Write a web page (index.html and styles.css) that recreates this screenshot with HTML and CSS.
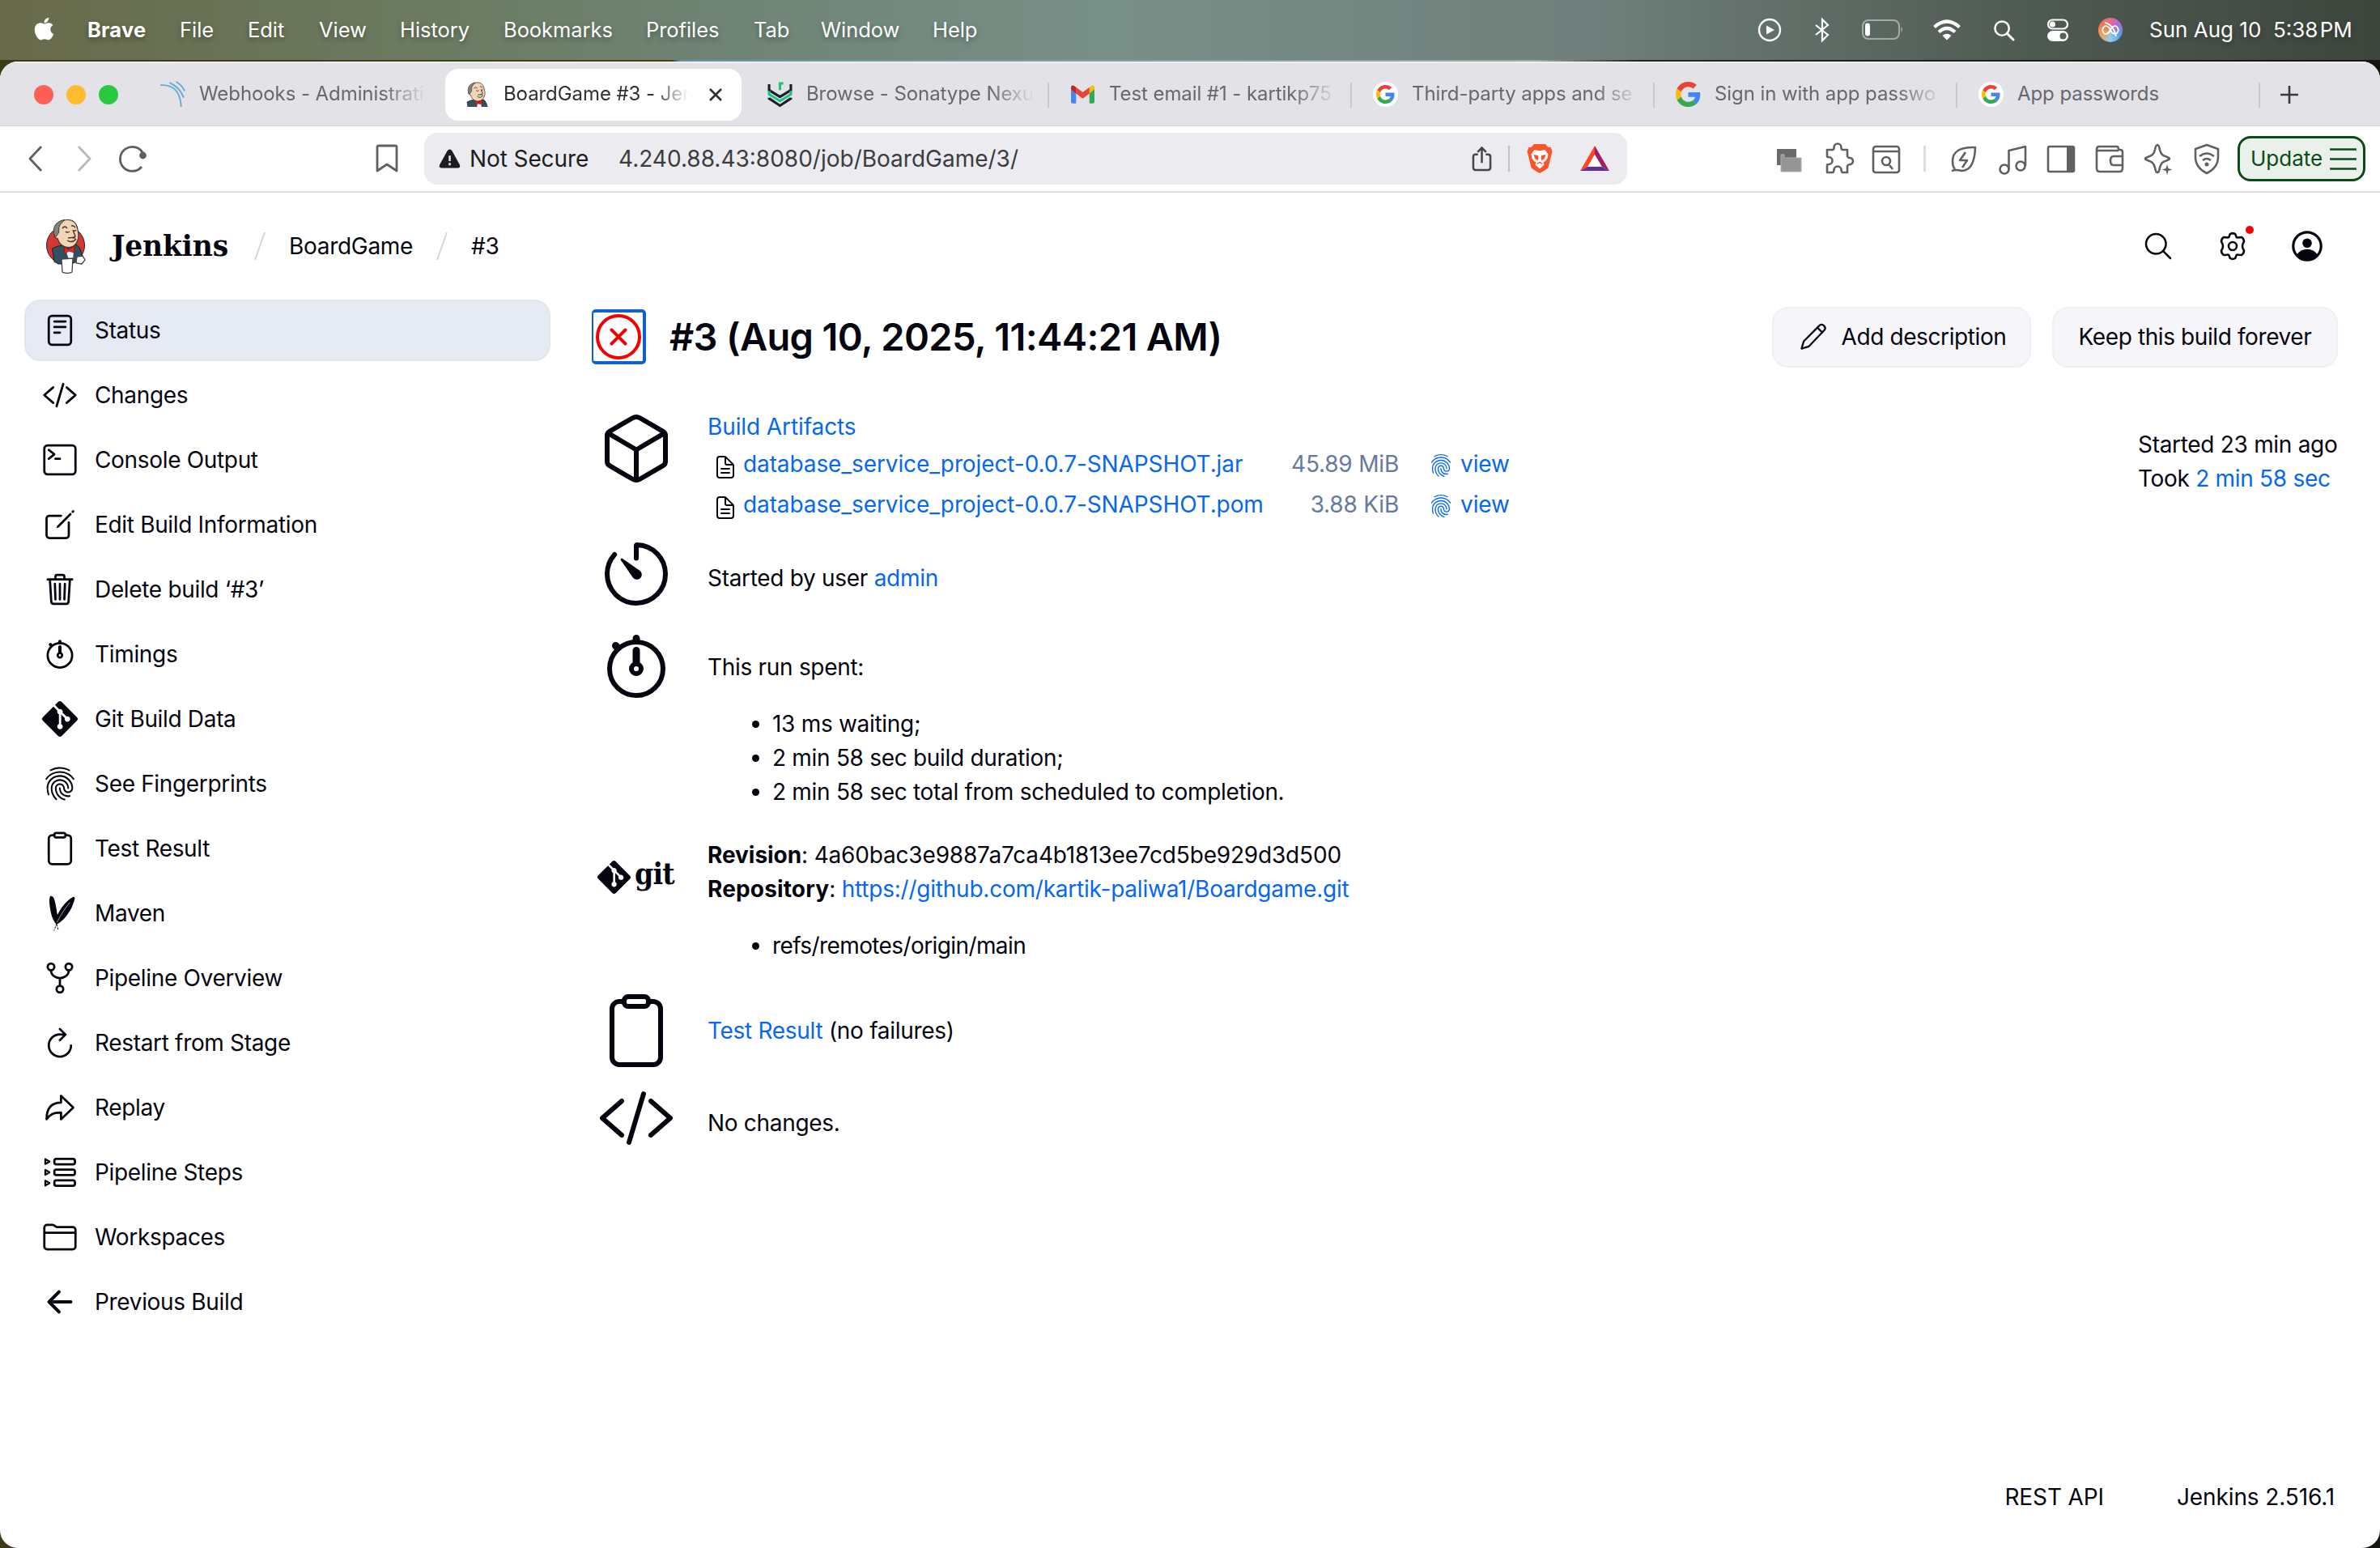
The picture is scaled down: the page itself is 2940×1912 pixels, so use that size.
FILE: index.html
```html
<!DOCTYPE html>
<html lang="en">
<head>
<meta charset="utf-8">
<title>BoardGame #3 - Jenkins</title>
<link rel="stylesheet" href="styles.css">
</head>
<body>
<svg class="defs" aria-hidden="true">
  <symbol id="reader" viewBox="0 0 512 512"><rect x="96" y="48" width="320" height="416" rx="48"/><path d="M176 128h160M176 208h160M176 288h80"/></symbol>
  <symbol id="code" viewBox="0 0 512 512"><path d="M160 368L32 256l128-112M352 368l128-112-128-112M304 96l-96 320"/></symbol>
  <symbol id="terminal" viewBox="0 0 512 512"><rect x="32" y="48" width="448" height="416" rx="48"/><path d="M96 112l80 64-80 64M192 240h64"/></symbol>
  <symbol id="edit" viewBox="0 0 512 512"><path d="M384 224v184a40 40 0 01-40 40H104a40 40 0 01-40-40V168a40 40 0 0140-40h167.48"/><path class="solid" d="M459.94 53.25a16.06 16.06 0 00-23.22-.56L424.35 65a8 8 0 000 11.31l11.34 11.32a8 8 0 0011.34 0l12.06-12c6.1-6.09 6.67-16.01.85-22.38zM399.34 90L218.82 270.2a9 9 0 00-2.31 3.93L208.16 299a3.91 3.91 0 004.86 4.86l24.85-8.35a9 9 0 003.93-2.31L422 112.66a9 9 0 000-12.66l-9.95-10a9 9 0 00-12.71 0z"/></symbol>
  <symbol id="trash" viewBox="0 0 512 512"><path d="M112 112l20 320c.95 18.49 14.4 32 32 32h184c17.67 0 30.87-13.51 32-32l20-320M80 112h352M192 112V72a24 24 0 0124-24h80a24 24 0 0124 24v40M256 176v224M184 176l8 224M328 176l-8 224"/></symbol>
  <symbol id="stopwatch" viewBox="0 0 512 512"><path stroke-width="48" d="M256 232v-80M256 88V72M132 132l-12-12"/><circle cx="256" cy="272" r="32"/><circle cx="256" cy="272" r="176"/></symbol>
  <symbol id="git" viewBox="0 0 24 24"><path class="solid" d="M23.546 10.93L13.067.452c-.604-.603-1.582-.603-2.188 0L8.708 2.627l2.76 2.76c.645-.215 1.379-.07 1.889.441.516.515.658 1.258.438 1.9l2.658 2.66c.645-.223 1.387-.078 1.9.435.721.72.721 1.884 0 2.604-.719.719-1.881.719-2.6 0-.539-.541-.674-1.337-.404-1.996L12.86 8.955v6.525c.176.086.342.203.488.348.713.721.713 1.883 0 2.6-.719.721-1.889.721-2.609 0-.719-.719-.719-1.879 0-2.598.182-.18.387-.316.605-.406V8.835c-.217-.091-.424-.222-.6-.401-.545-.545-.676-1.342-.396-2.009L7.636 3.7.45 10.881c-.6.605-.6 1.584 0 2.189l10.48 10.477c.604.604 1.582.604 2.186 0l10.43-10.43c.605-.603.605-1.582 0-2.187"/></symbol>
  <symbol id="finger" viewBox="0 0 512 512"><path class="solid" d="M390.42 75.28a10.45 10.45 0 01-5.32-1.44C340.72 50.08 302.35 40 256.35 40c-45.77 0-89.23 11.28-128.76 33.84C122 77 115.11 74.8 111.87 69a12.4 12.4 0 014.63-16.32A281.81 281.81 0 01256.35 16c49.23 0 92.23 11.28 139.39 36.48a12 12 0 014.85 16.08 11.3 11.3 0 01-10.17 6.72zm-330.79 126a11.73 11.73 0 01-6.7-2.16 12.26 12.26 0 01-2.78-16.8c22.89-33.6 52-60 86.69-78.48C209.42 65 302.35 64.72 375.16 103.6c34.68 18.48 63.8 44.64 86.69 78a12.29 12.29 0 01-2.78 16.8 11.26 11.26 0 01-16.18-2.88c-20.8-30.24-47.15-54-78.36-70.56-66.34-35.28-151.18-35.28-217.29.24-31.44 16.8-57.79 40.8-78.59 71a10 10 0 01-9.02 5.08zM204.1 491a10.66 10.66 0 01-8.09-3.6C175.9 466.48 165 453 149.55 424c-16-29.52-24.27-65.52-24.27-104.16 0-71.28 58.71-129.36 130.84-129.36S387 248.56 387 319.84a11.56 11.56 0 11-23.11 0c0-58.08-48.32-105.36-107.72-105.36S148.4 261.76 148.4 319.84c0 34.56 7.39 66.48 21.49 92.4 14.8 27.6 25 39.36 42.77 58.08a12.67 12.67 0 010 17 12.44 12.44 0 01-8.56 3.68zm165.75-44.4c-27.51 0-51.78-7.2-71.66-21.36a129.1 129.1 0 01-55-105.36 11.57 11.57 0 1123.12 0 104.28 104.28 0 0044.84 85.44c16.41 11.52 35.6 17 58.72 17a147.41 147.41 0 0024-2.4c6.24-1.2 12.25 3.12 13.4 9.84a11.92 11.92 0 01-9.47 13.92 152.28 152.28 0 01-27.95 2.88zM323.38 496a13 13 0 01-3-.48c-36.76-10.56-60.8-24.72-86-50.4-32.37-33.36-50.16-77.76-50.16-125.28 0-38.88 31.9-70.56 71.19-70.56s71.2 31.68 71.2 70.56c0 25.68 21.5 46.56 48.08 46.56s48.08-20.88 48.08-46.56c0-90.48-75.13-163.92-167.59-163.92-65.65 0-125.75 37.92-152.79 96.72-9 19.44-13.64 42.24-13.64 67.2 0 18.72 1.61 48.24 15.48 86.64 2.32 6.24-.69 13.2-6.7 15.36a11.34 11.34 0 01-14.79-7 276.39 276.39 0 01-16.88-95c0-28.8 5.32-55 15.72-77.76 30.75-67 98.94-110.4 173.6-110.4 105.18 0 190.71 84.24 190.71 187.92 0 38.88-31.9 70.56-71.2 70.56s-71.2-31.68-71.2-70.56C303.5 293.92 282 273 255.42 273s-48.08 20.88-48.08 46.56c0 41 15.26 79.44 43.23 108.24 22 22.56 43 35 75.59 44.16 6.24 1.68 9.94 8.4 8.32 14.64a11.3 11.3 0 01-11.1 9.4z"/></symbol>
  <symbol id="clipboard" viewBox="0 0 512 512"><path d="M336 64h32a48 48 0 0148 48v320a48 48 0 01-48 48H144a48 48 0 01-48-48V112a48 48 0 0148-48h32"/><rect x="176" y="32" width="160" height="64" rx="26"/></symbol>
  <symbol id="maven" viewBox="0 0 44 44"><path class="solid" d="M10 1c3-1 5 2 6 7 1.500 6 2 12 3 16C23 16 29 7 38 2c2-.8 3 1 2 3.500-2 6-4 12-8 17-3 5-7 9-12.500 12.500l-2 .5C13 30 11 24 10 16 9 11 8.500 4 10 1z"/><path d="M18 35l-3 8M18 36l2 7" stroke-width="1" stroke-dasharray="2 2"/><path d="M34 9C28 16 22 26 18.500 33" stroke="#fff" stroke-width=".6"/></symbol>
  <symbol id="network" viewBox="0 0 512 512"><circle cx="128" cy="96" r="48"/><circle cx="256" cy="416" r="48"/><circle cx="384" cy="96" r="48"/><path d="M256 256v112M128 144c0 74.67 68.92 112 128 112M384 144c0 74.67-68.920 112-128 112"/></symbol>
  <symbol id="refresh" viewBox="0 0 512 512"><path d="M320 146s24.360-12-64-12a160 160 0 10160 160M256 58l80 80-80 80"/></symbol>
  <symbol id="redo" viewBox="0 0 512 512"><path d="M448 256L272 88v96C103.570 184 64 304.770 64 424c48.610-62.240 91.600-96 208-96v96z"/></symbol>
  <symbol id="steps" viewBox="0 0 512 512"><rect x="176" y="62" width="296" height="78" rx="28"/><rect x="176" y="217" width="296" height="78" rx="28"/><rect x="176" y="372" width="296" height="78" rx="28"/><path stroke-width="26" d="M46 66l62 35-62 35zM46 221l62 35-62 35zM46 376l62 35-62 35z"/></symbol>
  <symbol id="folder" viewBox="0 0 512 512"><path d="M440 432H72a40 40 0 01-40-40V120a40 40 0 0140-40h75.890a40 40 0 0122.190 6.720l27.840 18.560a40 40 0 0022.190 6.720H440a40 40 0 0140 40v240a40 40 0 01-40 40zM32 192h448"/></symbol>
  <symbol id="back" viewBox="0 0 512 512"><path stroke-width="48" d="M244 400L100 256l144-144M120 256h292"/></symbol>
  <symbol id="cube" viewBox="0 0 512 512"><path d="M448 341.370V170.610A32 32 0 00432.110 143l-152-88.460a47.940 47.940 0 00-48.240 0L79.890 143A32 32 0 0064 170.610v170.760A32 32 0 0079.890 369l152 88.460a48 48 0 0048.240 0l152-88.460A32 32 0 00448 341.370zM69 154l187 110 187-110M256 464V264"/></symbol>
  <symbol id="timer" viewBox="0 0 512 512"><path d="M112.910 128A191.850 191.850 0 0064 254c-1.180 106.350 85.650 193.800 192 194 106.200.2 192-85.830 192-192 0-104.540-83.550-189.610-187.500-192a4.360 4.360 0 00-4.500 4.370V152"/><path class="solid" d="M233.380 278.630l-79-113a8.130 8.130 0 0111.320-11.320l113 79a32.500 32.500 0 01-37.250 53.260 33.210 33.210 0 01-8.070-7.940z"/></symbol>
  <symbol id="doc" viewBox="0 0 512 512"><path d="M416 221.250V416a48 48 0 01-48 48H144a48 48 0 01-48-48V96a48 48 0 0148-48h98.750a32 32 0 0122.620 9.370l141.260 141.260a32 32 0 019.370 22.620zM256 56v120a32 32 0 0032 32h120M176 288h160M176 368h160"/></symbol>
  <symbol id="search" viewBox="0 0 512 512"><circle cx="221" cy="221" r="157"/><path d="M338 338l110 110"/></symbol>
  <symbol id="gear" viewBox="0 0 44 44"><circle cx="22" cy="22" r="5.500"/><path d="M18.500 5.500Q22 3.500 25.500 5.500L27 9.500Q28 10.800 30 10.200L34 9.800Q37 11.500 37.500 15.500L35.800 19Q34.600 22 35.800 25L37.500 28.500Q37 32.500 34 34.200L30 33.800Q28 33.200 27 34.500L25.500 38.500Q22 40.500 18.500 38.500L17 34.500Q16 33.200 14 33.800L10 34.200Q7 32.500 6.500 28.500L8.200 25Q9.400 22 8.200 19L6.500 15.500Q7 11.500 10 9.800L14 10.200Q16 10.800 17 9.500Z"/></symbol>
  <symbol id="pencil" viewBox="0 0 44 44"><path stroke-width="2.500" d="M6 38l3-10L30.500 6.500q3-2.500 6 .5t.5 6L16 35zM27.500 9.500l6.500 6.500"/></symbol>
  <symbol id="google" viewBox="0 0 48 48"><path fill="#ea4335" d="M24 9.500c3.540 0 6.710 1.220 9.210 3.600l6.850-6.850C35.900 2.380 30.470 0 24 0 14.620 0 6.510 5.380 2.560 13.220l7.980 6.190C12.430 13.720 17.740 9.500 24 9.500z"/><path fill="#4285f4" d="M46.980 24.550c0-1.570-.15-3.090-.38-4.550H24v9.020h12.940c-.58 2.960-2.260 5.480-4.780 7.180l7.730 6c4.510-4.180 7.090-10.360 7.090-17.650z"/><path fill="#fbbc05" d="M10.530 28.590c-.48-1.450-.76-2.990-.76-4.590s.27-3.140.76-4.590l-7.980-6.190C.92 16.460 0 20.120 0 24c0 3.880.92 7.540 2.560 10.780l7.970-6.190z"/><path fill="#34a853" d="M24 48c6.480 0 11.930-2.130 15.890-5.810l-7.730-6c-2.150 1.450-4.920 2.300-8.160 2.300-6.260 0-11.570-4.220-13.470-9.910l-7.980 6.190C6.510 42.620 14.620 48 24 48z"/></symbol>
  <g id="bust">
    <path fill="#335061" stroke="#1c2b36" stroke-width="1.200" d="M8.500 37q5-3 12-4l6 4 9-5q6 1 8 7l3 9-6 4-8 4H16l-5-3z"/>
    <path fill="#f0d6b7" stroke="#49352a" stroke-width="1.200" d="M12 16C12 6 19 1.500 28 1.500c8 0 11 6 12 12 1 5 2 9 0 13-2 6-6 9-11 9-7 0-12-4-14-11-4 0-5-4-3-8.500z"/>
    <path fill="#7d8287" stroke="#49352a" stroke-width="1" d="M10.500 18C9 9 15 2.500 24 1.500c-3 3-6 5-7 9l-.5 7-3.500 5q-2-1-2.500-4.500z"/>
    <path fill="none" stroke="#49352a" stroke-width="1.400" d="M21 12q3-4 6 0M32 9q3-1 5 2M25 16q2 2 5 0M34 15q2 1 4-1M34 14l3 8-3 1.500M27 27q6 4 11-2M28 24q4-1 9 0"/>
    <path fill="#fff" d="M25 39h10l-1 12-5-1z"/>
    <path fill="#e0252a" stroke="#7a1111" stroke-width=".8" d="M23 35l6 3 7-4v8l-7-2-5 4z"/>
  </g>
  <symbol id="butler" viewBox="0 0 50 68">
    <circle cx="25" cy="33" r="23.500" fill="#d33833" stroke="#3a2020" stroke-width="1"/>
    <use href="#bust"/>
    <path fill="#fff" stroke="#444" stroke-width="1.300" d="M20 50l14-1-1 17q-6 3-12 0zM39 47l7-1 3 5-4 5-7-1z"/>
  </symbol>
</svg>

<header class="menubar">
  <svg class="apple" viewBox="0 0 24 24"><path d="M17.050 20.280c-.98.950-2.050.800-3.080.350-1.090-.460-2.090-.480-3.240 0-1.440.620-2.200.440-3.060-.350C2.790 15.250 3.510 7.590 9.050 7.310c1.350.070 2.290.740 3.080.800 1.180-.240 2.310-.930 3.570-.840 1.510.120 2.650.720 3.400 1.800-3.120 1.870-2.380 5.980.480 7.130-.570 1.500-1.310 2.990-2.540 4.090zM12.030 7.250c-.150-2.230 1.660-4.070 3.740-4.250.290 2.580-2.340 4.500-3.740 4.250z"/></svg>
  <nav class="menus"><b>Brave</b><span>File</span><span>Edit</span><span>View</span><span>History</span><span>Bookmarks</span><span>Profiles</span><span>Tab</span><span>Window</span><span>Help</span></nav>
  <div class="tray">
    <svg class="t-play" viewBox="0 0 30 30"><circle cx="15" cy="15" r="13" fill="none" stroke="#fff" stroke-width="2.400"/><path fill="#fff" d="M11 9.500v11l10-5.500z"/></svg>
    <svg class="t-bt" viewBox="0 0 20 30"><path fill="none" stroke="#fff" stroke-width="2.200" d="M2 9l15 12-7 7V2l7 7L2 21"/></svg>
    <svg class="t-bat" viewBox="0 0 52 26"><rect x="1" y="1" width="45" height="23" rx="7" fill="none" stroke="#fff" stroke-opacity=".45" stroke-width="2"/><rect x="4" y="4.500" width="6" height="16" rx="3" fill="#fff"/><path fill="#fff" fill-opacity=".5" d="M48.500 9q3 3.500 0 7z"/></svg>
    <svg class="t-wifi" viewBox="0 0 34 26"><path fill="none" stroke="#fff" stroke-width="4.200" d="M1.500 9.500q15.500-14 31 0M7 15.500q10-9 20 0"/><path fill="#fff" d="M11.500 20q5.500-4.500 11 0L17 25.500z"/></svg>
    <svg class="t-search" viewBox="0 0 28 28"><circle cx="11.500" cy="11.500" r="9" fill="none" stroke="#fff" stroke-width="2.600"/><path d="M18 18l8 8" stroke="#fff" stroke-width="3" stroke-linecap="round"/></svg>
    <svg class="t-cc" viewBox="0 0 28 28"><rect x="2" y="1.500" width="24" height="11" rx="5.500" fill="none" stroke="#fff" stroke-width="2.200"/><circle cx="7.500" cy="7" r="3.500" fill="#fff"/><rect x="1" y="15" width="26" height="13" rx="6.500" fill="#fff"/><circle cx="20.500" cy="21.500" r="4" fill="#58625a"/></svg>
    <span class="siri"><svg viewBox="0 0 30 30"><path fill="none" stroke="#fff" stroke-width="1.800" d="M5 15c2-7 7-6 10 0s8 7 10 0c-2-7-7-6-10 0s-8 7-10 0M8 6c6 1 12 7 14 17"/></svg></span>
    <span class="clock">Sun Aug 10&nbsp; 5:38&#8202;PM</span>
  </div>
</header>

<div class="window">
  <div class="tabstrip">
    <div class="lights"><i class="red"></i><i class="yellow"></i><i class="green"></i></div>
    <div class="tab first"><svg class="fav" viewBox="0 0 30 30" fill="none" stroke="#67a9d6" stroke-width="1.800"><path d="M0 4c16-1 24 8 25 26M11 1c9 4 14 9 17 18M19 0c5 3 8 6 10 11"/></svg><span class="tt fade">Webhooks - Administrati</span></div>
    <div class="tab active"><svg class="fav head" viewBox="7 0 40 46"><use href="#bust"/></svg><span class="tt fade">BoardGame #3 - Jen</span><svg class="close" viewBox="0 0 18 18"><path d="M2 2l14 14M16 2L2 16" stroke="#303033" stroke-width="2.600"/></svg></div>
    <div class="tab sep"><svg class="fav" viewBox="0 0 30 30" fill="none" stroke-width="3"><path stroke="#1b1c30" d="M2 3v7l13 8 13-8V3"/><path stroke="#1bc47d" d="M2 11v4l13 8 13-8v-4M15 10V2l4 0"/><path stroke="#1b1c30" d="M2 19v1l13 8.500 13-8.500v-1"/></svg><span class="tt fade">Browse - Sonatype Nexu</span></div>
    <div class="tab sep"><svg class="fav" viewBox="0 0 30 30"><path fill="#4285f4" d="M1 8l6 4.500V26H3q-2 0-2-2z"/><path fill="#34a853" d="M23 12.500L29 8v16q0 2-2 2h-4z"/><path fill="#fbbc04" d="M23 6.500q6-4.500 6 .5v2l-6 5z"/><path fill="#ea4335" d="M7 6.500l8 6 8-6V14l-8 6-8-6z"/><path fill="#c5221f" d="M7 6.500Q1 2 1 7v2l6 5z"/></svg><span class="tt fade">Test email #1 - kartikp75</span></div>
    <div class="tab sep"><span class="fav disc"><svg viewBox="0 0 48 48"><use href="#google"/></svg></span><span class="tt fade">Third-party apps and se</span></div>
    <div class="tab sep"><svg class="fav" viewBox="0 0 48 48"><use href="#google"/></svg><span class="tt fade">Sign in with app passwo</span></div>
    <div class="tab sep"><span class="fav disc"><svg viewBox="0 0 48 48"><use href="#google"/></svg></span><span class="tt">App passwords</span></div>
    <svg class="plus" viewBox="0 0 22 22"><path d="M11 0v22M0 11h22" stroke="#3a3a3d" stroke-width="2.600"/></svg>
  </div>

  <div class="toolbar">
    <svg class="nav-i" viewBox="0 0 60 60"><path d="M37 15L23 30l14 15"/></svg>
    <svg class="nav-i dim" viewBox="0 0 60 60"><path d="M23 15l14 15-14 15"/></svg>
    <svg class="nav-i" viewBox="0 0 60 60"><path d="M41 40A15 15 0 1 1 43 24"/><circle cx="42.500" cy="26" r="3" fill="#5f6064"/></svg>
    <svg class="nav-i mark" viewBox="0 0 60 60"><path d="M18 15.500q0-1.500 2-1.500h20q2 0 2 1.500V45l-12-8-12 8z"/></svg>
    <div class="urlbar">
      <svg class="warn" viewBox="0 0 28 26"><path fill="#1d1d20" d="M14 1q2 0 3 2l10 18q1 4-3 4H4q-4 0-3-4L11 3q1-2 3-2z"/><path d="M14 9v7M14 18.500v3" stroke="#ecebf0" stroke-width="2.600"/></svg>
      <span class="ns">Not Secure</span>
      <span class="url">4.240.88.43:8080/job/BoardGame/3/</span>
      <svg class="share" viewBox="0 0 26 34"><path fill="none" stroke="#454548" stroke-width="2.600" d="M8 11H5q-3 0-3 3v14q0 3 3 3h16q3 0 3-3V14q0-3-3-3h-3M13 22V3M7.500 8L13 2.500 18.500 8"/></svg>
      <i class="usep"></i>
      <svg class="lion" viewBox="0 0 32 36"><path fill="#fb542b" d="M9 0h14l3.500 4 3-.3 2 5.300-1 4-4 16Q25 31 16 36 7 31 5.500 29l-4-16-1-4 2-5.300 3 .3z"/><path fill="#fff" d="M9.500 7l6.500 1.300L22.500 7l4 5.500-1 5-2.500 3.500-2.500 1.500 1 3-5.500 5-5.500-5 1-3L9 21l-2.500-3.500-1-5z"/><path fill="#fb542b" d="M8.500 13l5.500 1 .5 3-1 3.500-3.500-3zM23.500 13l-5.500 1-.5 3 1 3.500 3.500-3zM12 24l4-2.500 4 2.500-1 .8-3-1.500-3 1.500z"/></svg>
      <svg class="bat" viewBox="0 0 36 32"><path fill="#ff4724" d="M18 0v11L9 26 0 31z"/><path fill="#9e1f63" d="M18 0l18 31-9-5-9-15z"/><path fill="#662d91" d="M0 31l9-5h18l9 5z"/><path fill="#fff" d="M18 11l8 14H10z"/></svg>
    </div>
    <div class="ext">
      <svg viewBox="0 0 60 60"><path stroke="none" fill="#6a6a6c" d="M15 18h24v20H15z"/><path fill="#959595" stroke="#b0b0b0" stroke-width="1" d="M20 25h4v4h21v17H20z"/></svg>
      <svg viewBox="0 0 60 60"><path d="M17 19h7q2-1 1.500-3a4.500 4.500 0 019 0q-.5 2 1.500 3h6v8q1 2 3 2a4 4 0 010 8q-2 0-3 2v8h-6q-1 0-1.500-3a4.500 4.500 0 00-9 0q-.5 3-1.500 3h-7v-9q0-1 2-1a4.500 4.500 0 000-9q-2 0-2-1z"/></svg>
      <svg viewBox="0 0 60 60"><rect x="14" y="15" width="32" height="32" rx="3"/><path d="M14 21h32M34 38l4 5"/><circle cx="30" cy="33" r="5"/></svg>
      <i class="esep"></i>
      <svg viewBox="0 0 60 60"><path d="M15 45q6-2 12 0 16 0 17-29-28-1-28 17 0 7 3 10M32 22l-7 10h9l-6 9"/></svg>
      <svg viewBox="0 0 60 60"><circle cx="20" cy="43" r="5.500"/><circle cx="40" cy="39" r="5.500"/><path d="M25.500 43V20L46 15v24"/></svg>
      <svg viewBox="0 0 60 60"><rect x="14" y="15" width="32" height="31" rx="2"/><path stroke="none" fill="#5f6064" d="M37 15h9v31h-9z"/></svg>
      <svg viewBox="0 0 60 60"><path d="M17 15h22q2 0 2 4h2q3 0 3 3v20q0 4-4 4H18q-4 0-4-4V19q0-4 3-4zM15 20h26M46 27H35q-4 0-4 5.500t4 5.500h11"/></svg>
      <svg viewBox="0 0 60 60"><path d="M29 13q2 0 3 6 1.500 7 8 8.500 4 1.500 4 2.500t-4 2.500q-6.500 1.500-8 8.500-1 6-3 6t-3-6q-1.500-7-8-8.500-4-1.500-4-2.500t4-2.500q6.500-1.500 8-8.500 1-6 3-6z"/><path stroke="none" fill="#5f6064" d="M41 37l1.500 5 5 1.500-5 1.500-1.500 5-1.500-5-5-1.500 5-1.500z"/></svg>
      <svg viewBox="0 0 60 60"><path d="M30 13l14 5v10q0 13-14 20-14-7-14-20V18zM21 27q9-7 18 0M25 32q5-4 10 0"/><circle stroke="none" fill="#5f6064" cx="30" cy="37" r="2.500"/></svg>
    </div>
    <div class="update">Update<svg viewBox="0 0 34 28"><path d="M0 1.500h34M0 14h34M0 26.500h34" stroke="#0b4a1a" stroke-width="2.600"/></svg></div>
  </div>

  <div class="crumbs">
    <svg class="logo" viewBox="0 0 50 68"><use href="#butler"/></svg>
    <span class="brand">Jenkins</span>
    <svg class="slash" viewBox="0 0 16 36"><path d="M14 1L2 35" stroke="#cfd8e2" stroke-width="2"/></svg>
    <span class="c1">BoardGame</span>
    <svg class="slash" viewBox="0 0 16 36"><path d="M14 1L2 35" stroke="#cfd8e2" stroke-width="2"/></svg>
    <span>#3</span>
    <div class="actions">
      <svg class="ico"><use href="#search"/></svg>
      <span class="gearbox"><svg class="ico gear"><use href="#gear"/></svg><i class="dot"></i></span>
      <svg class="user" viewBox="0 0 36 36"><circle cx="18" cy="18" r="16.300" fill="none" stroke="#05050f" stroke-width="3"/><circle cx="18" cy="14.500" r="5.500"/><path d="M6 28q4-6.500 12-6.500T30 28q-5 6-12 6T6 28z"/></svg>
    </div>
  </div>

  <div class="page">
    <nav class="side">
      <a class="item on"><svg class="ico"><use href="#reader"/></svg>Status</a>
      <a class="item"><svg class="ico"><use href="#code"/></svg>Changes</a>
      <a class="item"><svg class="ico"><use href="#terminal"/></svg>Console Output</a>
      <a class="item"><svg class="ico"><use href="#edit"/></svg>Edit Build Information</a>
      <a class="item"><svg class="ico"><use href="#trash"/></svg>Delete build ‘#3’</a>
      <a class="item"><svg class="ico"><use href="#stopwatch"/></svg>Timings</a>
      <a class="item"><svg class="ico"><use href="#git"/></svg>Git Build Data</a>
      <a class="item"><svg class="ico"><use href="#finger"/></svg>See Fingerprints</a>
      <a class="item"><svg class="ico"><use href="#clipboard"/></svg>Test Result</a>
      <a class="item"><svg class="ico mv"><use href="#maven"/></svg>Maven</a>
      <a class="item"><svg class="ico"><use href="#network"/></svg>Pipeline Overview</a>
      <a class="item"><svg class="ico"><use href="#refresh"/></svg>Restart from Stage</a>
      <a class="item"><svg class="ico"><use href="#redo"/></svg>Replay</a>
      <a class="item"><svg class="ico"><use href="#steps"/></svg>Pipeline Steps</a>
      <a class="item"><svg class="ico"><use href="#folder"/></svg>Workspaces</a>
      <a class="item"><svg class="ico"><use href="#back"/></svg>Previous Build</a>
    </nav>

    <main class="main">
      <div class="titlebar">
        <span class="status"><svg viewBox="0 0 58 58"><circle cx="29" cy="29" r="26" fill="none" stroke="#f00000" stroke-width="4"/><path d="M20.500 20.500l17 17M37.500 20.500l-17 17" stroke="#f00000" stroke-width="4" stroke-linecap="round"/></svg></span>
        <h1>#3 (Aug 10, 2025, 11:44:21 AM)</h1>
        <div class="btns">
          <a class="btn add"><svg class="pen"><use href="#pencil"/></svg>Add description</a>
          <a class="btn keep">Keep this build forever</a>
        </div>
      </div>
      <div class="body">
        <div class="rows">
          <section class="row r1"><svg class="big"><use href="#cube"/></svg>
            <div><a>Build Artifacts</a>
              <div class="file"><svg class="sm"><use href="#doc"/></svg><a>database_service_project-0.0.7-SNAPSHOT.jar</a><span class="size">45.89 MiB</span><svg class="fp"><use href="#finger"/></svg><a>view</a></div>
              <div class="file"><svg class="sm"><use href="#doc"/></svg><a>database_service_project-0.0.7-SNAPSHOT.pom</a><span class="size">3.88 KiB</span><svg class="fp"><use href="#finger"/></svg><a>view</a></div>
            </div></section>
          <section class="row r2"><svg class="big"><use href="#timer"/></svg><p>Started by user <a>admin</a></p></section>
          <section class="row r3"><svg class="big"><use href="#stopwatch"/></svg>
            <div><p>This run spent:</p><ul><li>13 ms waiting;</li><li>2 min 58 sec build duration;</li><li>2 min 58 sec total from scheduled to completion.</li></ul></div></section>
          <section class="row r4"><span class="big gitlogo"><svg viewBox="0 0 24 24"><use href="#git"/></svg><b>git</b></span>
            <div><p class="rev"><b>Revision</b>: 4a60bac3e9887a7ca4b1813ee7cd5be929d3d500</p><p class="repo"><b>Repository</b>: <a>https://github.com/kartik-paliwa1/Boardgame.git</a></p><ul class="refs"><li>refs/remotes/origin/main</li></ul></div></section>
          <section class="row r5"><svg class="big"><use href="#clipboard"/></svg><p><a>Test Result</a> (no failures)</p></section>
          <section class="row r6"><svg class="big"><use href="#code"/></svg><p>No changes.</p></section>
        </div>
        <aside class="when">Started 23 min ago<br>Took <a>2 min 58 sec</a></aside>
      </div>
    </main>
  </div>
  <footer class="foot"><span>REST API</span><span>Jenkins 2.516.1</span></footer>
</div>
</body>
</html>
```
FILE: styles.css
```css
* { box-sizing: border-box; }
body {
  margin: 0; width: 2940px; height: 1912px; overflow: hidden;
  display: flex; flex-direction: column;
  font: 400 28px/42px Inter, "Noto Sans", sans-serif;
  color: #05050f; background: linear-gradient(90deg, #3d3a18 0, #45431d 830px, #6a93a5 840px, #7fa0ab 1300px, #a3a9a6 1900px, #242622 2020px, #14170f 100%);
}
svg { display: block; flex: none; overflow: visible; }
p, ul, h1 { margin: 0; }
.defs { position: absolute; width: 0; height: 0; overflow: hidden; }
a { color: #0667f0; text-decoration: none; }

/* system menu bar */
.menubar {
  height: 74px; flex: none; display: flex; align-items: center;
  padding: 0 33px 0 40px; color: #fff; font-size: 25.5px; line-height: 32px;
  background: linear-gradient(90deg, #686a4a 0, #6b7a60 500px, #6f8373 850px, #788f88 1370px, #707f7b 1970px, #4f5a52 2500px, #3d463d 100%);
  text-shadow: 0 3px 6px rgba(0,0,0,.35);
}
.apple { width: 37px; height: 37px; margin: -4px 0 0 -4px; fill: #fff; }
.menus { display: grid; grid-template-columns: 114px 84px 88px 100px 128px 176px 133px 83px 138px 80px; margin-left: 35px; letter-spacing: -.05px; }
.menus b { font-weight: 700; letter-spacing: .2px; }
.tray { margin-left: auto; display: flex; align-items: center; }
.t-play { width: 30px; height: 30px; margin-right: 40px; }
.t-bt { width: 20px; height: 30px; margin-right: 39px; }
.t-bat { width: 52px; height: 26px; margin-right: 36px; }
.t-wifi { width: 34px; height: 26px; margin-right: 40px; }
.t-search { width: 27px; height: 27px; margin-right: 39px; }
.t-cc { width: 28px; height: 28px; margin-right: 36px; }
.siri { width: 30px; height: 30px; border-radius: 50%; background: conic-gradient(#e86a8a, #9c6fe8, #5b9df0, #8fd0f0, #f2a05a, #ee7a50, #e86a8a); margin-right: 33px; }
.clock { width: 252px; white-space: nowrap; font-size: 26px; }

/* browser window */
.window { margin-top: 2px; flex: 1; display: flex; flex-direction: column; background: #fff; border-radius: 22px; overflow: hidden; }
.tabstrip { height: 80px; flex: none; display: flex; align-items: center; background: #e3e2e7; border-bottom: 1px solid #d6d6da; border-top: 2px solid #eeeef1; font-size: 24px; line-height: 34px; color: #68686c; }
.lights { display: flex; gap: 16px; padding-left: 42px; width: 173px; flex: none; }
.lights i { width: 24px; height: 24px; border-radius: 50%; }
.red { background: #fe5f57; } .yellow { background: #febb2e; } .green { background: #28c840; }
.tab { width: 374px; flex: none; height: 64px; display: flex; align-items: center; padding: 0 20px 0 26px; }
.tab.first { padding-left: 25px; }
.tab.active { width: 366px; margin: 0 6px 0 3px; padding: 0 22px 0 24px; background: #fff; border-radius: 16px; color: #303033; }
.tab.sep { position: relative; }
.tab.sep::after { content: ""; position: absolute; right: 0; top: 17px; width: 2px; height: 31px; background: #cacace; }
.fav { width: 31px; height: 31px; flex: none; margin-right: 17px; }
.head { overflow: hidden; }
.disc { border-radius: 50%; background: #fff; padding: 4px; }
.disc svg { width: 23px; height: 23px; }
.tt { width: 290px; flex: none; white-space: nowrap; margin-top: -1px; letter-spacing: -.08px; }
.active .tt { width: 236px; }
.fade { -webkit-mask-image: linear-gradient(90deg, #000 78%, transparent 97%); mask-image: linear-gradient(90deg, #000 78%, transparent 97%); }
.close { width: 18px; height: 18px; margin-left: 17px; }
.plus { width: 22px; height: 22px; margin-left: 25px; }

.toolbar { height: 82px; flex: none; display: flex; align-items: center; border-bottom: 2px solid #dfdfe1; padding-left: 14px; }
.nav-i, .ext svg { width: 60px; height: 60px; fill: none; stroke: #5f6064; stroke-width: 2.8; stroke-linejoin: round; }
.ext svg { stroke-width: 2.6; }
.nav-i.dim { stroke: #b9b9bc; }
.mark { margin-left: 254px; }
.urlbar { width: 1486px; height: 64px; margin-left: 16px; background: #ecebf0; border-radius: 16px; display: flex; align-items: center; padding: 0 22px 0 18px; color: #1d1d20; }
.warn { width: 27px; height: 26px; margin-right: 11px; }
.ns { width: 184px; letter-spacing: -.1px; }
.url { flex: 1; color: #3c3c40; }
.share { width: 25px; height: 33px; }
.usep { width: 2px; height: 32px; background: #c2c2c6; margin: 0 21px 0 20px; }
.lion { width: 32px; height: 36px; margin-right: 34px; }
.bat { width: 36px; height: 32px; }
.ext { display: flex; align-items: center; margin-left: 170px; }
.esep { width: 3px; height: 32px; background: #dedee0; margin: 0 17px 0 16px; }
.update { margin-left: 8px; width: 158px; height: 56px; flex: none; border: 3px solid #0b4a1a; border-radius: 16px; background: #eaf0ea; color: #0b4a1a; font-size: 26px; display: flex; align-items: center; justify-content: space-between; padding: 0 8px 0 13px; }
.update svg { width: 33px; height: 27px; }

/* Jenkins header */
.ico { width: 44px; height: 44px; }
.ico, .big, .sm, .pen { fill: none; stroke: #05050f; stroke-width: 32; stroke-linecap: round; stroke-linejoin: round; }
.solid { stroke: none; fill: currentColor; }
.crumbs { height: 132px; flex: none; display: flex; align-items: center; padding: 0 71px 0 56px; font-weight: 440; letter-spacing: -.3px; }
.logo { width: 50px; height: 68px; }
.brand { font: 700 34.500px/42px "DejaVu Serif", serif; letter-spacing: -.1px; margin-left: 32px; width: 147px; white-space: nowrap; }
.slash { width: 16px; height: 36px; margin: 0 28px; }
.actions { margin-left: auto; display: flex; align-items: center; gap: 52px; }
.actions .ico { stroke-width: 32; width: 40px; height: 40px; }
.gearbox { position: relative; }
.actions .ico.gear { stroke-width: 2.8; }
.dot { position: absolute; right: -6px; top: -5px; width: 10px; height: 10px; border-radius: 50%; background: #f00; }
.user { width: 38px; height: 38px; fill: #05050f; margin-left: 1px; }

.page { display: flex; flex: 1; letter-spacing: -.3px; }
.side { width: 650px; margin-left: 30px; display: flex; flex-direction: column; gap: 4px; }
.item { height: 76px; display: flex; align-items: center; gap: 21px; padding-left: 22px; color: #05050f; border-radius: 20px; font-weight: 430; letter-spacing: -.33px; }
.item.on { background: #e6eaf3; border: 2px solid #e2e7ee; padding-left: 20px; }
.ico.mv { stroke-width: 2; }

.main { margin-left: 51px; flex: 1; padding-right: 52px; }
.titlebar { height: 92px; display: flex; align-items: center; }
.status { width: 67px; height: 68px; border: 4px solid #0b62c9; border-left-width: 2px; border-radius: 5px; display: flex; align-items: center; justify-content: center; }
.status svg { width: 58px; height: 58px; }
h1 { font-size: 47px; line-height: 60px; font-weight: 640; letter-spacing: -.65px; margin-left: 29px; white-space: nowrap; }
.btns { margin-left: auto; display: flex; gap: 26px; }
.btn { height: 75px; display: flex; align-items: center; justify-content: center; white-space: nowrap; border: 2px solid #efeff4; border-radius: 20px; background: #f5f5fa; color: #05050f; font-weight: 430; letter-spacing: -.4px; }
.add { width: 320px; }
.keep { width: 353px; }
.pen { width: 40px; height: 40px; margin-right: 15px; }
.body { display: flex; justify-content: space-between; padding-top: 44px; }
.row { display: flex; gap: 41px; padding-left: 7px; }
.row > :last-child { margin-left: -1px; }
.big { width: 96px; height: 96px; flex: none; }
.r1 { height: 155px; letter-spacing: -.1px; } .r2 { height: 114px; } .r3 { height: 260px; } .r4 { height: 190px; } .r5 { height: 108px; }
.r2 > p { padding-top: 32px; }
.r3 > div { padding-top: 28px; }
.r5 > p { padding-top: 27px; }
.r6 > p { padding-top: 33px; }
ul { padding-left: 80px; padding-top: 28px; }
.rev { letter-spacing: -.18px; }
.rev b { letter-spacing: -.05px; }
.repo { letter-spacing: -.22px; }
.repo b { letter-spacing: .15px; }
.refs { letter-spacing: -.6px; }
.file { display: grid; grid-template-columns: 44px 640px 170px 76px auto; height: 50px; align-items: center; white-space: nowrap; }
.sm { width: 32px; height: 32px; margin: 7px 0 0 6px; }
.size { text-align: right; color: #657a9c; letter-spacing: -.2px; }
.fp { width: 30px; height: 30px; margin: 4px 0 0 37px; color: #0667f0; }
.gitlogo { display: flex; align-items: center; gap: 5px; }
.gitlogo svg { width: 41px; height: 41px; }
.gitlogo b { font: 700 37px/44px "DejaVu Serif Condensed", "DejaVu Serif", serif; font-stretch: condensed; letter-spacing: -.8px; margin-top: -8px; }
.when { margin-top: 22px; width: 247px; white-space: nowrap; }
.foot { display: flex; justify-content: flex-end; gap: 90px; padding: 0 56px 42px 0; letter-spacing: -.12px; }
```
